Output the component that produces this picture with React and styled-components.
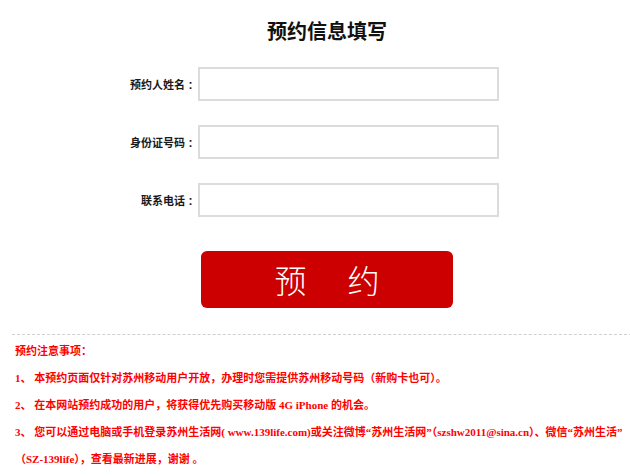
import React from "react";
import styled, { createGlobalStyle } from "styled-components";

const GlobalStyle = createGlobalStyle`
  body {
    margin: 0;
    background: #fff;
    font-family: "Liberation Sans", "Noto Sans CJK SC", sans-serif;
  }
`;

const Page = styled.div`
  width: 630px;
  padding-left: 12px;
`;

const Title = styled.h1`
  margin: 0;
  padding-top: 20px;
  height: 47px;
  text-align: center;
  font-size: 20px;
  line-height: 24px;
  font-weight: bold;
  color: #111;
`;

const Form = styled.div`
  display: flex;
  flex-direction: column;
  gap: 24px;
`;

const Row = styled.div`
  display: grid;
  grid-template-columns: 184px 301px;
  column-gap: 2px;
  align-items: center;
`;

const Label = styled.label`
  text-align: right;
  font-size: 11px;
  font-weight: bold;
  color: #1a1a1a;
`;

const Colon = styled.span`
  display: inline-block;
  width: 11px;
  text-align: center;
  font-size: 12px;
`;

const Input = styled.input`
  box-sizing: border-box;
  height: 34px;
  border: 2px solid #dcdcdc;
  outline: none;
  padding: 0 6px;
`;

const Submit = styled.button`
  display: flex;
  justify-content: center;
  gap: 41px;
  box-sizing: border-box;
  width: 252px;
  height: 57px;
  margin: 34px 0 0 189px;
  padding: 0;
  border: none;
  border-radius: 6px;
  background: #cc0000;
  color: #fff;
  font-family: "Noto Sans CJK SC", sans-serif;
  font-size: 32px;
  line-height: 57px;
  font-weight: 300;
`;

const Notes = styled.div`
  margin-top: 26px;
  border-top: 1px dashed #cfcfcf;
  padding: 3px 0 0 3px;
  color: #ff0000;
  font-family: "Liberation Serif", "Noto Sans CJK SC", serif;
  font-size: 11px;
  font-weight: bold;
  line-height: 27px;
  white-space: nowrap;
`;

const Note = styled.p`
  margin: 0;
`;

export default function App() {
  return (
    <>
      <GlobalStyle />
      <Page>
        <Title>预约信息填写</Title>
        <Form>
          <Row>
            <Label>预约人姓名<Colon>:</Colon></Label>
            <Input />
          </Row>
          <Row>
            <Label>身份证号码<Colon>:</Colon></Label>
            <Input />
          </Row>
          <Row>
            <Label>联系电话<Colon>:</Colon></Label>
            <Input />
          </Row>
        </Form>
        <Submit>
          <span>预</span>
          <span>约</span>
        </Submit>
        <Notes>
          <Note>预约注意事项：</Note>
          <Note>1、 本预约页面仅针对苏州移动用户开放，办理时您需提供苏州移动号码（新购卡也可）。</Note>
          <Note>2、 在本网站预约成功的用户，将获得优先购买移动版 4G iPhone 的机会。</Note>
          <Note>
            3、 您可以通过电脑或手机登录苏州生活网( www.139life.com)或关注微博“苏州生活网”（szshw2011@sina.cn）、微信“苏州生活”
            <br />
            （SZ-139life），查看最新进展，谢谢 。
          </Note>
        </Notes>
      </Page>
    </>
  );
}
